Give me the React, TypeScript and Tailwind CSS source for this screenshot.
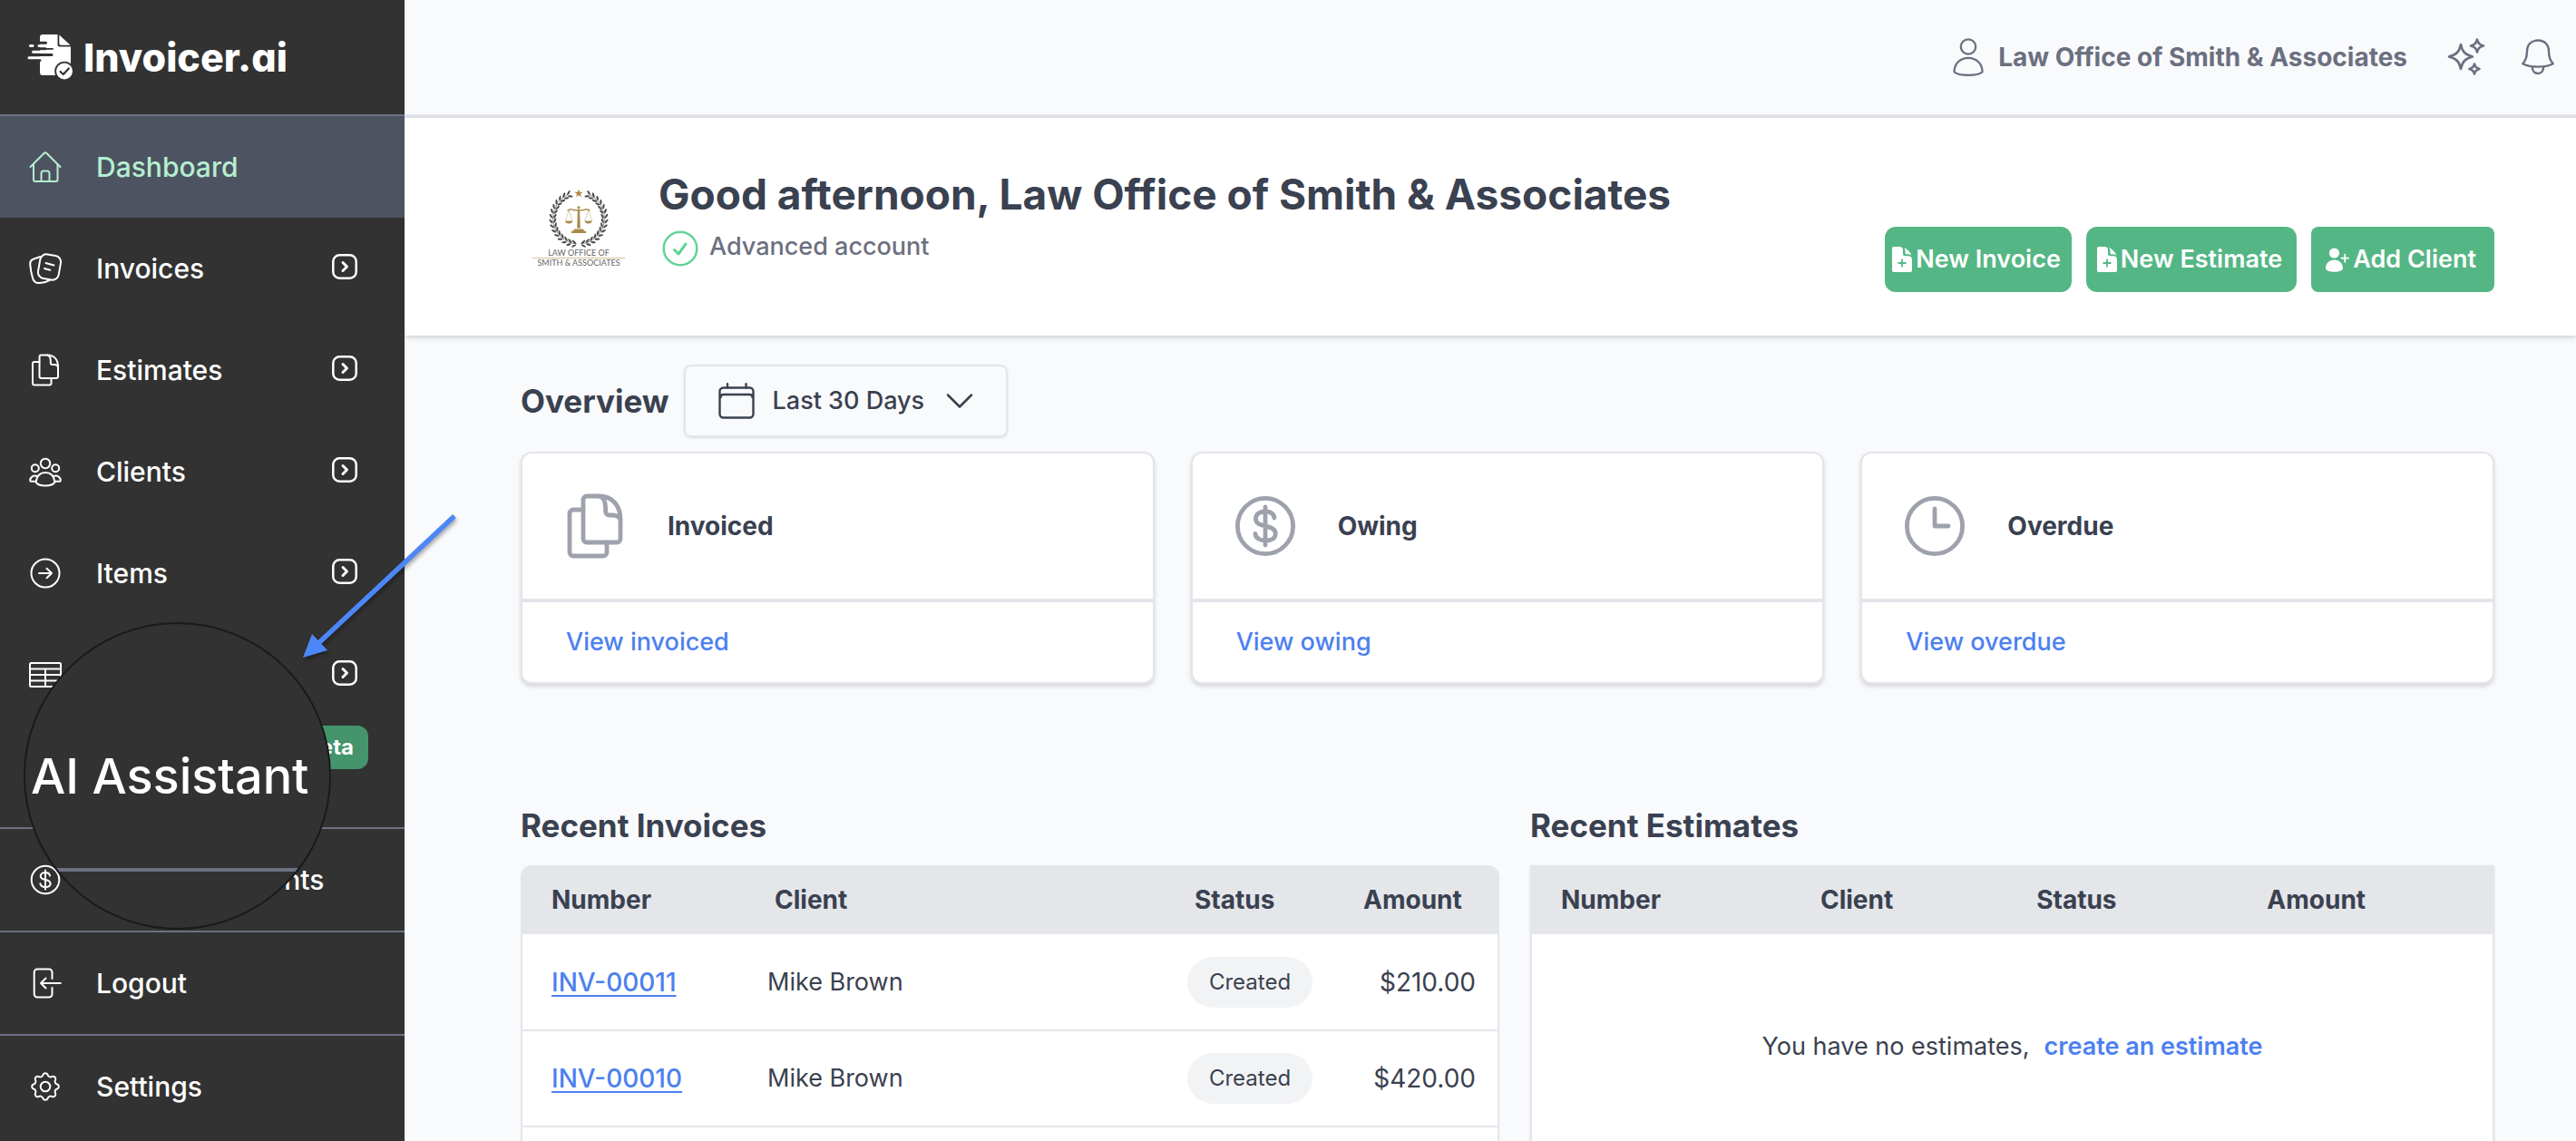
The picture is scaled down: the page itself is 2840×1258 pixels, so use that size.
import type { ReactNode } from "react";

type IconProps = { className?: string; stroke?: number };

function Glyph({ className = "size-9", stroke = 2, children }: IconProps & { children: ReactNode }) {
  return (
    <svg
      viewBox="0 0 36 36"
      className={className}
      fill="none"
      stroke="currentColor"
      strokeWidth={stroke}
      strokeLinecap="round"
      strokeLinejoin="round"
      aria-hidden="true"
    >
      {children}
    </svg>
  );
}

const HomeIcon = () => (
  <Glyph>
    <path d="M1.5 18 16.8 2.8a1.7 1.7 0 0 1 2.4 0L34.5 18" />
    <path d="M5 15v17a2 2 0 0 0 2 2h22.500a2 2 0 0 0 2-2V15" />
    <path d="M13.500 34v-9a2.500 2.500 0 0 1 2.500-2.500h4a2.500 2.500 0 0 1 2.500 2.500v9" />
  </Glyph>
);

const NotesIcon = () => (
  <Glyph>
    <rect x="11" y="3" width="23" height="27" rx="7" transform="rotate(10 22.500 16.500)" />
    <path d="M12.500 5 4.600 7.800C2 8.800 1 10.500 1.200 13.200c.4 5 1.300 10.500 2.800 15.300 1.300 4.500 4 6 8 5.500 4-.4 8-1.400 11-3.200" />
    <path d="m18.500 12 9 2.500M17 18l6.300 1.700" />
  </Glyph>
);

const DocsIcon = (p: IconProps) => (
  <Glyph {...p}>
    <path d="M13.500 1.500H20C28 1.500 32 7 32 14.500V25a2 2 0 0 1-2 2H13.500a2 2 0 0 1-2-2V3.500a2 2 0 0 1 2-2Z" />
    <path d="M20.500 1.500c2.500.8 3.300 3.500 3.300 6.500v2a2 2 0 0 0 2 2h1.700c2.500 0 4 1 4.500 2.500" />
    <path d="M11.500 9H6a2 2 0 0 0-2 2v21.500a2 2 0 0 0 2 2h16.500a2 2 0 0 0 2-2V27" />
  </Glyph>
);

const PeopleIcon = () => (
  <Glyph>
    <circle cx="18" cy="9" r="5.200" />
    <circle cx="6.800" cy="14.300" r="4" />
    <circle cx="29.200" cy="14.300" r="4" />
    <path d="M7.500 29.500C8.500 22.500 12.500 19 18 19s9.500 3.500 10.500 10.500C27 32.200 23 33.500 18 33.500S9 32.200 7.500 29.500Z" />
    <path d="M8.800 23C4.800 21.600 1.500 24 1.200 27.500c0 .9.300 1.300 1 1.300h5.300M27.200 23c4-1.400 7.300 1 7.600 4.500 0 .9-.3 1.300-1 1.300h-5.300" />
  </Glyph>
);

const ItemsIcon = () => (
  <Glyph>
    <circle cx="18" cy="18" r="15.500" />
    <path d="M11 18h14M19.500 12.700 25 18l-5.500 5.300" />
  </Glyph>
);

const ReportIcon = () => (
  <Glyph>
    <rect x="1" y="5" width="34" height="26" rx="1.500" />
    <path d="M1 11.500h34M1 18h34M1 24.500h34M18 11.500V31" />
  </Glyph>
);

const DollarIcon = (p: IconProps) => (
  <Glyph {...p}>
    <circle cx="18" cy="18" r="15.300" />
    <path d="M23 13.500C22.600 11 20.500 10 18 10c-3 0-5.300 1.400-5.300 4 0 5.600 10.900 2.500 10.900 8.200 0 2.600-2.400 3.800-5.600 3.800-3 0-5.300-1.300-5.600-3.800M18 7.500v21" />
  </Glyph>
);

const ClockIcon = (p: IconProps) => (
  <Glyph {...p}>
    <circle cx="18" cy="18" r="15.300" />
    <path d="M18 8.500V18h7.500" />
  </Glyph>
);

const LogoutIcon = () => (
  <Glyph>
    <path d="M25.500 13V6a3.500 3.500 0 0 0-3.500-3.500H9.200A3.500 3.500 0 0 0 5.700 6v24a3.500 3.500 0 0 0 3.500 3.500H22a3.500 3.500 0 0 0 3.500-3.500v-7" />
    <path d="M34.800 18H13M18.500 12.500 13 18l5.500 5.500" />
  </Glyph>
);

function gearPath() {
  const at = (deg: number) => {
    const a = (deg * Math.PI) / 180;
    return `${(18 + 13.4 * Math.sin(a)).toFixed(2)} ${(18 - 13.4 * Math.cos(a)).toFixed(2)}`;
  };
  let d = `M${at(-11)}`;
  for (let i = 0; i < 8; i++) {
    d += `A2.800 2.800 0 0 1 ${at(i * 45 + 11)}A3.200 3.200 0 0 0 ${at(i * 45 + 34)}`;
  }
  return d + "Z";
}

const GearIcon = () => (
  <Glyph>
    <path d={gearPath()} />
    <circle cx="18" cy="18" r="5.300" />
  </Glyph>
);

const ExpandIcon = () => (
  <svg viewBox="0 0 28 28" className="size-7" fill="none" stroke="currentColor" strokeWidth="2.500" strokeLinecap="round" strokeLinejoin="round" aria-hidden="true">
    <rect x="1.300" y="1.300" width="25.400" height="25.400" rx="7" />
    <path d="m12 9.500 4.500 4.500-4.500 4.500" strokeWidth="3" />
  </svg>
);

function BrandMark() {
  return (
    <svg viewBox="0 0 51 52" className="h-[52px] w-[51px]" aria-hidden="true">
      <path d="M17 1h16.500v11.500a2 2 0 0 0 2 2H48V44a2 2 0 0 1-2 2H17a3 3 0 0 1-3-3V4a3 3 0 0 1 3-3Z" fill="#fff" />
      <path d="M35.300 1.500v9.500a1.800 1.800 0 0 0 1.800 1.800H47.500Z" fill="#fff" />
      <g stroke="#323232" strokeWidth="3" strokeLinecap="round">
        <path d="M10 10.300h10.500M3 16.800h17M3 23.400h24M3 29.500h11" />
      </g>
      <path d="M10 8.800h3.900v20H10z" fill="#323232" />
      <g stroke="#fff" strokeWidth="3" strokeLinecap="round">
        <path d="M3.500 13.600h2.500M13 13.600h14M6.500 20.200H28M2 26.700h22" />
      </g>
      <path d="M15 16.900h13M16 23.400h11" stroke="#323232" strokeWidth="1.800" strokeLinecap="round" />
      <circle cx="41" cy="41.500" r="10.800" fill="#323232" />
      <circle cx="41" cy="41.500" r="9" fill="#fff" />
      <path d="m36.500 42 3.300 3 6-6.500" fill="none" stroke="#323232" strokeWidth="2.200" strokeLinecap="round" strokeLinejoin="round" />
    </svg>
  );
}

const leafAngles = Array.from({ length: 15 }, (_, i) => 26 + i * 10.6);

function FirmLogo() {
  return (
    <svg viewBox="0 0 128 128" className="size-32 shrink-0" role="img" aria-label="Law Office of Smith & Associates logo">
      <path d="m64 22.500 1.200 3.200 3.400.1-2.700 2.100 1 3.300-2.900-1.900-2.900 1.900 1-3.300-2.700-2.100 3.400-.1Z" fill="#b08a45" />
      {[1, -1].map((side) => (
        <g key={side} transform={side === 1 ? undefined : "translate(128 0) scale(-1 1)"} fill="#4a4a4a">
          <path d="M76 28.800A28.500 28.500 0 0 1 66 83" fill="none" stroke="#4a4a4a" strokeWidth="0.600" />
          {leafAngles.map((a) => (
            <g key={a} transform={`rotate(${a} 64 55)`}>
              <ellipse cx="61.500" cy="24.500" rx="2.800" ry="1.100" transform="rotate(32 61.500 24.500)" />
              <ellipse cx="61.500" cy="28.800" rx="2.800" ry="1.100" transform="rotate(-32 61.500 28.800)" />
            </g>
          ))}
        </g>
      ))}
      <g fill="#a88b4a">
        <circle cx="64" cy="42.800" r="1.500" />
        <path d="M62.900 45h2.200l.7 20.500h-3.600ZM59 66.500h10l1 2.200h2.200v2.200H55.800v-2.200H58Z" />
        <path d="M49 57.500h8.600c-.5 2-2 3-4.300 3s-3.800-1-4.300-3ZM70.400 57.500H79c-.5 2-2 3-4.300 3s-3.800-1-4.300-3Z" />
      </g>
      <g fill="none" stroke="#a88b4a" strokeLinecap="round">
        <path d="M52 46.200c2-2.500 4-1.500 6-.8 2.200.8 4 .6 6 0 2 .6 3.800.8 6 0 2-.7 4-1.700 6 .8" strokeWidth="1.300" />
        <path d="M53.300 46 49.500 57M53.300 46l3.800 11M74.700 46l-3.800 11M74.700 46l3.800 11" strokeWidth="0.400" />
      </g>
      <text x="64" y="96" textAnchor="middle" fontSize="9" fontFamily="Lato, sans-serif" fill="#666">LAW OFFICE OF</text>
      <path d="M13 98.500h102" stroke="#d9bd97" strokeWidth="1" />
      <text x="64" y="107" textAnchor="middle" fontSize="9" fontFamily="Lato, sans-serif" fill="#666">SMITH &amp; ASSOCIATES</text>
    </svg>
  );
}

const FilePlus = () => (
  <svg viewBox="0 0 22 28" className="h-7 w-[22px]" aria-hidden="true">
    <path d="M2 0h6c3 0 4 1.800 4 4v4c0 1.500 1 2.200 2.500 2.200H18c2.500 0 4 1.600 4 4V26a2 2 0 0 1-2 2H2a2 2 0 0 1-2-2V2a2 2 0 0 1 2-2Z" fill="#fff" />
    <path d="M12.500 0.500c3.500 1.500 7 5 9 8.800-1.500-.9-3.500-1.300-6-1.100l-1-.8V4.500c0-1.800-.8-3-2-4Z" fill="#fff" />
    <path d="M11 13.500v9M6.500 18h9" stroke="#55b685" strokeWidth="1.800" />
  </svg>
);

const UserPlus = () => (
  <svg viewBox="0 0 26 27" className="h-[27px] w-[26px]" aria-hidden="true">
    <circle cx="9.500" cy="6" r="5.600" fill="#fff" />
    <path d="M9.500 13.500c5.500 0 9.500 4 9.500 9.500-.8 2.500-4.500 3.800-9.500 3.800S.8 25.500 0 23c0-5.500 4-9.500 9.500-9.500Z" fill="#fff" />
    <path d="M21.200 7v9.500M16.700 11.700h9" stroke="#fff" strokeWidth="1.800" />
  </svg>
);

type NavItem = { label: string; icon: ReactNode; active?: boolean; expand?: boolean; line?: boolean; concealed?: boolean; beta?: boolean };

const nav: NavItem[] = [
  { label: "Dashboard", icon: <HomeIcon />, active: true, line: true },
  { label: "Invoices", icon: <NotesIcon />, expand: true },
  { label: "Estimates", icon: <DocsIcon />, expand: true },
  { label: "Clients", icon: <PeopleIcon />, expand: true },
  { label: "Items", icon: <ItemsIcon />, expand: true },
  { label: "Reports", icon: <ReportIcon />, expand: true, concealed: true },
  { label: "AI Assistant", icon: null, concealed: true, beta: true },
  { label: "Accept Payments", icon: <DollarIcon />, line: true },
  { label: "Logout", icon: <LogoutIcon />, line: true },
  { label: "Settings", icon: <GearIcon />, line: true },
];

function Sidebar() {
  return (
    <aside className="relative z-10 w-[446px] shrink-0 bg-[#323232] text-white">
      <div className="flex h-[126px] items-center gap-[11px] pl-[30px]">
        <BrandMark />
        <span className="text-[43px] leading-[52px] font-extrabold [font-feature-settings:'cv11']">Invoicer.ai</span>
      </div>
      <nav>
        {nav.map((n) => (
          <div key={n.label} className={n.line ? "border-t-2 border-[#6b7082]" : ""}>
            <div className={`relative flex h-28 items-center px-8 ${n.active ? "bg-[#4d5361] text-[#b5efd0]" : ""}`}>
              <a href="#" aria-label={n.label} className="flex min-w-9 items-center gap-[38px] text-[30px] leading-10 font-medium">
                {n.icon}
                {!n.concealed && <span>{n.label}</span>}
              </a>
              {n.expand && (
                <button type="button" aria-label={`Expand ${n.label}`} className="mr-5 mb-1 ml-auto">
                  <ExpandIcon />
                </button>
              )}
              {n.beta && (
                <span className="mr-2 ml-auto self-start rounded-xl bg-[#44946c] px-4 text-2xl leading-[48px] font-bold">Beta</span>
              )}
            </div>
          </div>
        ))}
      </nav>
      <div className="absolute top-[686px] left-[26px] flex size-[339px] flex-col justify-center overflow-hidden rounded-full border-2 border-[#1a1a1a] bg-[#323232] pl-1.5">
        <span className="text-[54px] leading-[68px] font-medium whitespace-nowrap">AI Assistant</span>
        <span className="absolute top-[269px] left-0 h-1 w-full bg-[#6b7082]" />
      </div>
      <svg viewBox="0 0 190 180" className="absolute top-[557px] left-[324px] h-[180px] w-[190px] drop-shadow-[1px_3px_2px_rgba(0,0,0,0.35)]" aria-hidden="true">
        <path d="M177 12 24 155" stroke="#4d86f7" strokeWidth="5.500" />
        <path d="m10 168 10-26 17 18Z" fill="#4d86f7" />
      </svg>
    </aside>
  );
}

function TopBar() {
  return (
    <header className="flex h-[130px] shrink-0 items-center justify-end border-b-4 border-[#e4e5ea] pr-6 text-[#6b7080]">
      <a href="#" className="flex items-center gap-4 text-[28px] leading-9 font-bold">
        <svg viewBox="0 0 34 42" className="h-[42px] w-[34px]" fill="none" stroke="currentColor" strokeWidth="2.300" aria-hidden="true">
          <circle cx="17" cy="9.500" r="8.200" />
          <path d="M17 21.800c8.500 0 15.500 6 15.500 15.500-2.500 2.500-8.500 3.600-15.500 3.600S4 39.800 1.500 37.300C1.500 27.800 8.500 21.800 17 21.800Z" strokeLinejoin="round" />
        </svg>
        Law Office of Smith &amp; Associates
      </a>
      <button type="button" aria-label="AI tools" className="ml-11">
        <svg viewBox="0 0 42 42" className="size-[42px]" fill="none" stroke="currentColor" strokeWidth="2.600" strokeLinejoin="round" aria-hidden="true">
          <path d="M15 7c1.500 8 5 11.500 13 13.500C20 22.500 16.500 26 15 34 13.500 26 10 22.500 2 20.500 10 18.500 13.500 15 15 7Z" />
          <path d="M33 1.500c.8 4.200 2.500 6 7 7-4.500 1-6.200 2.800-7 7-.8-4.200-2.500-6-7-7 4.500-1 6.200-2.800 7-7ZM30 28.500c.7 3.300 2 4.600 5.500 5.500-3.500.9-4.800 2.200-5.500 5.500-.7-3.300-2-4.600-5.500-5.500 3.500-.9 4.800-2.200 5.500-5.500Z" />
        </svg>
      </button>
      <button type="button" aria-label="Notifications" className="ml-10">
        <svg viewBox="0 0 36 40" className="h-10 w-9" fill="none" stroke="currentColor" strokeWidth="2.400" strokeLinejoin="round" aria-hidden="true">
          <path d="M18 1.500c7.500 0 12 5 12 12 0 6 .8 9.500 4.700 13.700C30 29.800 24.500 30.600 18 30.600S6 29.800 1.300 27.200C5.200 23 6 19.500 6 13.500c0-7 4.500-12 12-12Z" />
          <path d="M11.800 30.500c0 4.500 2.500 7.500 6.200 7.500s6.200-3 6.200-7.500" />
        </svg>
      </button>
    </header>
  );
}

function Hero() {
  return (
    <section className="flex h-60 shrink-0 items-center bg-white pr-[90px] pl-32 shadow-[0_2px_6px_rgba(0,0,0,0.18)]">
      <FirmLogo />
      <div className="mb-5 ml-6">
        <h1 className="text-[46px] leading-[56px] font-bold">Good afternoon, Law Office of Smith &amp; Associates</h1>
        <p className="mt-2 flex items-center gap-3 pl-1 text-[27px] leading-9 font-medium text-[#6b7080]">
          <svg viewBox="0 0 40 40" className="mt-1 size-10" fill="none" stroke="#63d297" strokeLinecap="round" strokeLinejoin="round" aria-hidden="true">
            <circle cx="20" cy="20" r="18.300" strokeWidth="2.500" />
            <path d="m13.500 21.500 4.500 4.500 8-11" strokeWidth="3" />
          </svg>
          Advanced account
        </p>
      </div>
      <div className="mt-[72px] ml-auto flex gap-4 text-[27px] leading-9 font-semibold text-white">
        <button type="button" className="flex h-[72px] items-center gap-1 rounded-xl bg-[#55b685] pr-3 pl-2">
          <FilePlus />New Invoice
        </button>
        <button type="button" className="flex h-[72px] items-center gap-1 rounded-xl bg-[#55b685] pr-4 pl-3">
          <FilePlus />New Estimate
        </button>
        <button type="button" className="flex h-[72px] items-center gap-1 rounded-lg bg-[#55b685] pr-5 pl-4">
          <UserPlus />Add Client
        </button>
      </div>
    </section>
  );
}

const cards = [
  { title: "Invoiced", link: "View invoiced", icon: <DocsIcon className="size-[72px]" stroke={2.4} /> },
  { title: "Owing", link: "View owing", icon: <DollarIcon className="size-[72px]" stroke={2.4} /> },
  { title: "Overdue", link: "View overdue", icon: <ClockIcon className="size-[72px]" stroke={2.4} /> },
];

const invoices = [
  { id: "INV-00011", client: "Mike Brown", status: "Created", amount: "$210.00" },
  { id: "INV-00010", client: "Mike Brown", status: "Created", amount: "$420.00" },
];

export default function App() {
  return (
    <div className="flex h-screen overflow-hidden bg-[#f9fafc] font-['Inter',sans-serif] text-[#3a4150]">
      <Sidebar />
      <main className="flex min-w-0 flex-1 flex-col">
        <TopBar />
        <Hero />
        <div className="flex flex-1 flex-col pr-[90px] pl-32">
          <div className="mt-8 flex items-center gap-4">
            <h2 className="text-[35px] leading-10 font-bold">Overview</h2>
            <button type="button" className="flex h-20 items-center rounded-lg border-2 border-[#e4e5ea] px-9 text-[27px] leading-9 font-medium shadow-sm">
              <svg viewBox="0 0 40 40" className="size-10" fill="none" stroke="currentColor" strokeWidth="2.400" strokeLinecap="round" aria-hidden="true">
                <rect x="1.500" y="5.500" width="37" height="33" rx="4" />
                <path d="M2.500 16q0-3 3-3h29q3 0 3 3M10 1.200v4M30.500 1.200v4" />
              </svg>
              <span className="ml-5">Last 30 Days</span>
              <svg viewBox="0 0 30 18" className="ml-6 h-[18px] w-[30px]" fill="none" stroke="currentColor" strokeWidth="2.500" strokeLinecap="round" strokeLinejoin="round" aria-hidden="true">
                <path d="m2 2.500 13 13 13-13" />
              </svg>
            </button>
          </div>

          <div className="mt-4 grid grid-cols-3 gap-10">
            {cards.map((c) => (
              <article key={c.title} className="rounded-xl border-2 border-[#e4e5ea] bg-white shadow-[0_3px_5px_rgba(0,0,0,0.14)]">
                <div className="flex h-40 items-center gap-11 px-11">
                  <span className="text-[#9ea2ad]">{c.icon}</span>
                  <h3 className="text-[28px] leading-9 font-bold">{c.title}</h3>
                </div>
                <div className="flex h-[92px] items-center border-t-4 border-[#e4e5ea] px-12">
                  <a href="#" className="text-[27px] leading-9 font-medium text-[#4d80f0]">{c.link}</a>
                </div>
              </article>
            ))}
          </div>

          <div className="mt-[132px] grid flex-1 grid-cols-[1079fr_1063fr] gap-[34px]">
            <section className="flex flex-col">
              <h2 className="text-[35px] leading-[48px] font-bold">Recent Invoices</h2>
              <div className="mt-5 flex-1 overflow-hidden rounded-t-xl border-x-2 border-[#e4e5ea] bg-white">
                <table className="w-full text-left text-[28px] leading-9">
                  <thead className="h-[76px] bg-[#e4e6ea]">
                    <tr>
                      <th className="w-[246px] pl-8 font-bold">Number</th>
                      <th className="pl-8 font-bold">Client</th>
                      <th className="w-[186px] pl-8 font-bold">Status</th>
                      <th className="w-[180px] pl-8 font-bold">Amount</th>
                    </tr>
                  </thead>
                  <tbody>
                    {invoices.map((r) => (
                      <tr key={r.id} className="h-[106px] border-b-2 border-[#e4e5ea]">
                        <td className="pl-8">
                          <a href="#" className="font-medium text-[#4d80f0] underline decoration-2 underline-offset-4">{r.id}</a>
                        </td>
                        <td className="pl-6 text-[27px]">{r.client}</td>
                        <td className="pl-6">
                          <span className="flex h-14 w-[138px] items-center justify-center rounded-full bg-[#f2f3f5] text-2xl">{r.status}</span>
                        </td>
                        <td className="pr-6 text-right">{r.amount}</td>
                      </tr>
                    ))}
                  </tbody>
                </table>
              </div>
            </section>

            <section className="flex flex-col">
              <h2 className="text-[35px] leading-[48px] font-bold">Recent Estimates</h2>
              <div className="mt-5 flex-1 border-x-2 border-[#e4e5ea] bg-white shadow-sm">
                <table className="w-full text-left text-[28px] leading-9">
                  <thead className="h-[76px] bg-[#e4e6ea]">
                    <tr>
                      <th className="w-[27%] pl-8 font-bold">Number</th>
                      <th className="w-[22.5%] pl-8 font-bold">Client</th>
                      <th className="w-[24%] pl-8 font-bold">Status</th>
                      <th className="pl-8 font-bold">Amount</th>
                    </tr>
                  </thead>
                  <tbody>
                    <tr className="h-[248px]">
                      <td colSpan={4} className="text-center text-[27px]">
                        You have no estimates,
                        <a href="#" className="ml-4 font-semibold text-[#4d80f0]">create an estimate</a>
                      </td>
                    </tr>
                  </tbody>
                </table>
              </div>
            </section>
          </div>
        </div>
      </main>
    </div>
  );
}
